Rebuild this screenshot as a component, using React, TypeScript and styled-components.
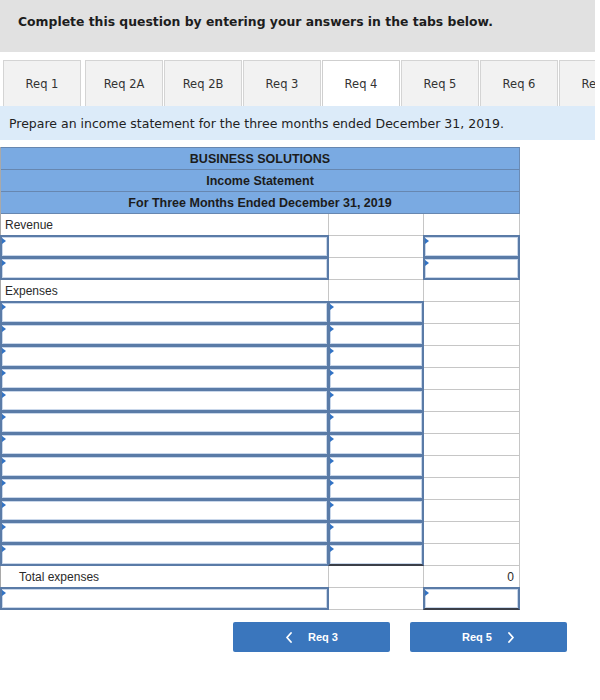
import React from "react";
import styled, { createGlobalStyle, css } from "styled-components";

const Global = createGlobalStyle`
  html, body { margin: 0; padding: 0; background: #ffffff; }
  body { font-family: "DejaVu Sans", Verdana, sans-serif; color: #222; }
`;

const Page = styled.div`
  width: 600px;
  display: flex;
  flex-direction: column;
`;

const TopBand = styled.div`
  width: 595px;
  height: 52px;
  box-sizing: border-box;
  background: #e1e1e1;
  padding: 14px 0 0 18px;
  font-family: "DejaVu Sans", Verdana, sans-serif;
  font-weight: bold;
  font-size: 12.4px;
  line-height: 16px;
  color: #1d1d1d;
`;

const TabRow = styled.div`
  width: 595px;
  margin-top: 8px;
  height: 46px;
  display: flex;
  gap: 1px;
  padding-left: 3px;
  box-sizing: border-box;
  overflow: hidden;
`;

const Tab = styled.div<{ $active?: boolean }>`
  flex: 0 0 78px;
  box-sizing: border-box;
  height: 46px;
  display: flex;
  align-items: center;
  justify-content: center;
  font-family: "DejaVu Sans", Verdana, sans-serif;
  font-size: 11.5px;
  color: #333;
  white-space: nowrap;
  background: #f2f2f2;
  border: 1px solid #d4d4d4;
  border-bottom: none;
  &:first-child { margin-right: 3px; }
  ${(p) =>
    p.$active &&
    css`
      background: #ffffff;
      border-color: #cfcfcf;
    `}
`;

const Instruction = styled.div`
  width: 595px;
  height: 34px;
  box-sizing: border-box;
  background: #dcebf9;
  padding-left: 9px;
  display: flex;
  align-items: center;
  font-family: "DejaVu Sans", Verdana, sans-serif;
  font-size: 12.5px;
  color: #222;
`;

const Statement = styled.div`
  margin-top: 7px;
  width: 519px;
  display: grid;
  grid-template-columns: 328px 95px 96px;
  grid-template-rows: 23px 22px 22px;
  grid-auto-rows: 22px;
  border-left: 1px solid #a9a9a9;
  box-sizing: border-box;
  font-family: "Liberation Sans", Arial, sans-serif;
  font-size: 12px;
  color: #2a2a2a;
`;

const HeadRow = styled.div<{ $first?: boolean }>`
  grid-column: 1 / -1;
  box-sizing: border-box;
  background: #7aaae2;
  border-right: 1px solid #6b8bb4;
  border-bottom: 1px solid #6787b0;
  ${(p) => p.$first && css`border-top: 1px solid #6787b0;`}
  display: flex;
  align-items: center;
  justify-content: center;
  font-weight: bold;
  font-size: 12.5px;
  color: #1c1c1c;
`;

const Cell = styled.div<{
  $input?: boolean;
  $total?: boolean;
  $indent?: boolean;
  $right?: boolean;
}>`
  position: relative;
  box-sizing: border-box;
  border-right: 1px solid #c6c6c6;
  border-bottom: 1px solid #c6c6c6;
  display: flex;
  align-items: center;
  justify-content: ${(p) => (p.$right ? "flex-end" : "flex-start")};
  padding: ${(p) => (p.$right ? "0 5px 0 0" : p.$indent ? "0 0 0 18px" : "0 0 0 4px")};
  background: #fff;
  ${(p) =>
    p.$input &&
    css`
      border: 2px solid #5a7ba7;
      margin: -1px 0 0 -1px;
      height: calc(100% + 1px);
      width: calc(100% + 1px);
      box-shadow: inset 0 0 0 1px #c9d7ea;
      &::before {
        content: "";
        position: absolute;
        top: 1px;
        left: 0;
        border-left: 4px solid #3273c4;
        border-top: 3px solid transparent;
        border-bottom: 3px solid transparent;
      }
    `}
  ${(p) =>
    p.$total &&
    css`
      border-bottom: 2px solid #3b3f48;
    `}
`;

const Nav = styled.div`
  width: 595px;
  margin-top: 12px;
  display: flex;
  justify-content: flex-end;
  gap: 20px;
  padding-right: 28px;
  box-sizing: border-box;
`;

const NavButton = styled.button`
  width: 157px;
  height: 30px;
  border: none;
  border-radius: 2px;
  background: #3a76bd;
  color: #fff;
  display: flex;
  align-items: center;
  justify-content: center;
  gap: 15px;
  font-family: "Liberation Sans", Arial, sans-serif;
  font-weight: bold;
  font-size: 11px;
  padding: 0;
  cursor: pointer;
`;

const Chevron = ({ dir }: { dir: "left" | "right" }) => (
  <svg width="8" height="11" viewBox="0 0 8 11">
    <path
      d={dir === "left" ? "M6 1 L2 5.5 L6 10" : "M2 1 L6 5.5 L2 10"}
      fill="none"
      stroke="#fff"
      strokeWidth="1.8"
      strokeLinecap="round"
      strokeLinejoin="round"
    />
  </svg>
);

type C = { input?: boolean; total?: boolean; text?: string; indent?: boolean; right?: boolean };
type Row = [C, C, C];

const rows: Row[] = [
  [{ text: "Revenue" }, {}, {}],
  [{ input: true }, {}, { input: true }],
  [{ input: true }, {}, { input: true }],
  [{ text: "Expenses" }, {}, {}],
  ...Array.from({ length: 12 }, (_, i): Row => [
    { input: true },
    { input: true, total: i === 11 },
    {},
  ]),
  [{ text: "Total expenses", indent: true }, {}, { text: "0", right: true }],
  [{ input: true }, {}, { input: true, total: true }],
];

const tabs = ["Req 1", "Req 2A", "Req 2B", "Req 3", "Req 4", "Req 5", "Req 6", "Req 7"];

export default function App() {
  return (
    <Page>
      <Global />
      <TopBand>Complete this question by entering your answers in the tabs below.</TopBand>
      <TabRow>
        {tabs.map((t) => (
          <Tab key={t} $active={t === "Req 4"}>
            {t}
          </Tab>
        ))}
      </TabRow>
      <Instruction>Prepare an income statement for the three months ended December 31, 2019.</Instruction>
      <Statement>
        <HeadRow $first>BUSINESS SOLUTIONS</HeadRow>
        <HeadRow>Income Statement</HeadRow>
        <HeadRow>For Three Months Ended December 31, 2019</HeadRow>
        {rows.map((r, ri) =>
          r.map((c, ci) => (
            <Cell
              key={`${ri}-${ci}`}
              $input={c.input}
              $total={c.total}
              $indent={c.indent}
              $right={c.right}
            >
              {c.text}
            </Cell>
          ))
        )}
      </Statement>
      <Nav>
        <NavButton>
          <Chevron dir="left" />
          <span>Req 3</span>
        </NavButton>
        <NavButton>
          <span>Req 5</span>
          <Chevron dir="right" />
        </NavButton>
      </Nav>
    </Page>
  );
}
